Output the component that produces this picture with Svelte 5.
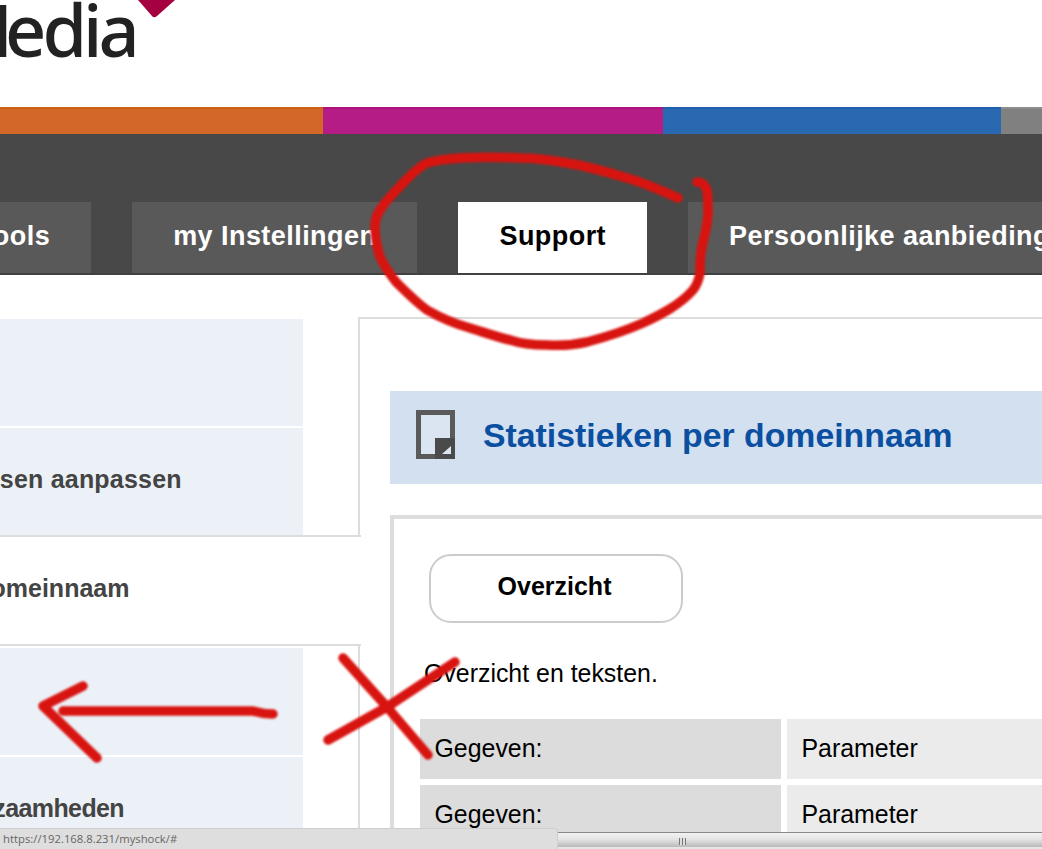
<script>
	const tabs = ['my Tools', 'my Instellingen', 'Support', 'Persoonlijke aanbiedingen'];
	const colours = ['orange', 'magenta', 'blue', 'grey'];
	const sideItems = [
		{ label: '' },
		{ label: 'Adressen aanpassen' },
		{ label: 'Per domeinnaam', active: true },
		{ label: '' },
		{ label: 'Werkzaamheden' }
	];
	const rows = [
		['Gegeven:', 'Parameter'],
		['Gegeven:', 'Parameter']
	];
</script>

<div class="viewport">
	<div class="page">
		<header class="top">
			<div class="logo">
				<span class="logoword"><span class="cap">M</span>edia</span>
				<svg class="diamond" width="44" height="20" viewBox="0 0 44 20">
					<path d="M0 0 L14 16 Q16 18.5 19 16 L37 0 Z" fill="#a5003f" />
				</svg>
			</div>
		</header>

		<div class="colourbar">
			{#each colours as c}
				<span class={c}></span>
			{/each}
		</div>

		<nav>
			{#each tabs as t}
				<a href="#top" class="tab" class:active={t === 'Support'}>{t}</a>
			{/each}
		</nav>

		<div class="content">
			<aside>
				{#each sideItems as item}
					<div class="row" class:active={item.active}>
						<div class="item">{item.label}</div>
					</div>
				{/each}
			</aside>

			<main>
				<div class="heading">
					<svg class="noteicon" width="40" height="49" viewBox="0 0 40 49">
						<rect x="2.5" y="2.5" width="34" height="44" fill="#dbe5f2" stroke="#5a5a5a" stroke-width="5" />
						<rect x="19" y="28" width="20" height="21" fill="#4a4a4a" />
						<path d="M35 36 V44 H26 Z" fill="#dbe5f2" />
					</svg>
					<h1>Statistieken per domeinnaam</h1>
				</div>

				<section class="box">
					<button class="pill">Overzicht</button>
					<p>Overzicht en teksten.</p>
					<div class="grid">
						{#each rows as r}
							<div class="key">{r[0]}</div>
							<div class="val">{r[1]}</div>
						{/each}
					</div>
				</section>
			</main>
		</div>
	</div>

	<svg class="scribble" width="1042" height="849" viewBox="0 0 1042 849">
		<g fill="none" stroke="#d81410" stroke-width="9.5" stroke-linecap="round" stroke-linejoin="round">
			<path d="M678 198 C660 190 645 183 627 178 C607 172 587 166 567 163 C550 160 535 158 520 158 C500 157 480 157 460 158 C447 159 436 160 427 163 C418 167 411 175 403 183 C395 192 386 200 380 210 C376 216 375 221 375 227 C375 238 377 247 380 257 C385 267 390 275 397 283 C406 292 416 302 427 310 C441 318 455 324 470 328 C483 332 497 337 510 340 C522 344 535 345 547 345 C561 346 574 345 587 342 C606 337 625 331 643 323 C660 315 680 305 693 290 C697 285 699 279 700 273 C700 264 700 256 702 247 C704 236 708 225 708 213 C708 205 708 197 707 190 C705 185 702 182 697 182" />
			<path d="M63 711 H253 Q263 714 273 714" />
			<path d="M83 686 L43 706 L97 758" />
			<path d="M343 658 L387 707 L428 755" />
			<path d="M455 662 L387 707 L328 740" />
		</g>
	</svg>

	<div class="status">https://192.168.8.231/myshock/#</div>
	<div class="scrollbar"><span class="grip"></span></div>
</div>

<style>
	:global(body) {
		overflow: hidden;
		background: #fff;
	}
	.viewport {
		position: relative;
		width: 100vw;
		height: 100vh;
		overflow: hidden;
		font-family: 'Liberation Sans', Arial, sans-serif;
		color: #000;
	}
	.page {
		width: 1600px;
		margin-left: -113px;
	}
	.top {
		height: 107px;
		overflow: hidden;
	}
	.logo {
		display: flow-root;
		position: relative;
		margin-left: 60px;
		height: 107px;
	}
	.logoword {
		display: block;
		font-family: 'Noto Sans', sans-serif;
		font-size: 72px;
		font-weight: 500;
		line-height: 66px;
		letter-spacing: -4px;
		margin-top: -4px;
		color: #222;
		filter: blur(0.5px);
	}
	.cap {
		letter-spacing: -8px;
	}
	.diamond {
		position: absolute;
		left: 191px;
		top: 0;
	}
	.colourbar {
		display: grid;
		grid-template-columns: 436px 340px 338px 1fr;
		height: 27px;
	}
	.colourbar span {
		border-top: 2px solid transparent;
	}
	.colourbar .orange { background: #d26827; border-color: #cf5f12; }
	.colourbar .magenta { background: #b51c85; border-color: #b0107d; }
	.colourbar .blue { background: #2b68b2; border-color: #1f60b0; }
	.colourbar .grey { background: #808080; border-color: #8c8c8c; }
	nav {
		display: flex;
		gap: 41px;
		align-items: flex-end;
		height: 139px;
		padding-left: 2px;
		background: #484848;
		border-bottom: 2px solid #414141;
	}
	.tab {
		height: 71px;
		line-height: 68px;
		padding: 0 41px;
		background: #5a5959;
		color: #fff;
		font-size: 27px;
		font-weight: bold;
		letter-spacing: 0.45px;
		text-decoration: none;
		white-space: nowrap;
	}
	.tab.active {
		background: #fff;
		color: #000;
	}
	.content {
		display: grid;
		grid-template-columns: 473px 1fr;
		margin-top: 42px;
	}
	.row {
		padding: 0 55px 0 0;
		border-right: 2px solid #ddd;
	}
	.row:first-child, .row:nth-child(4) {
		padding-top: 2px;
		padding-bottom: 2px;
	}
	.row.active {
		padding: 0;
		border-right: 0;
		border-top: 2px solid #ddd;
		border-bottom: 2px solid #ddd;
		margin-right: -1px;
		background: #fff;
		position: relative;
	}
	.item {
		height: 107px;
		line-height: 102px;
		padding-left: 41px;
		background: #ecf1f8;
		color: #444;
		font-size: 25px;
		font-weight: bold;
		white-space: nowrap;
	}
	.row:nth-child(2) .item {
		letter-spacing: 0.2px;
	}
	.row:last-child .item {
		padding-left: 48px;
		letter-spacing: -0.6px;
	}
	.row.active .item {
		background: #fff;
	}
	main {
		border-top: 2px solid #ddd;
		padding: 72px 0 0 30px;
	}
	.heading {
		display: flex;
		align-items: center;
		gap: 27px;
		height: 93px;
		padding-left: 26px;
		background: #d3e0f0;
	}
	.noteicon {
		margin-bottom: 6px;
	}
	h1 {
		margin: 0 0 4px;
		font-size: 33.8px;
		font-weight: bold;
		color: #0b4fa1;
	}
	.box {
		margin-top: 31px;
		border: 4px solid #ddd;
		padding: 35px 0 0 26px;
	}
	.pill {
		display: block;
		width: 254px;
		height: 69px;
		margin-left: 9px;
		padding: 0 3px 4px 0;
		background: #fff;
		border: 2px solid #ccc;
		border-radius: 22px;
		font: bold 25px 'Liberation Sans', Arial, sans-serif;
		color: #000;
	}
	p {
		margin: 35px 0 31px 4px;
		font-size: 24.9px;
		line-height: 30px;
	}
	.grid {
		display: grid;
		grid-template-columns: 361px 1fr;
		grid-auto-rows: 60px;
		gap: 6px;
		font-size: 24.9px;
		line-height: 58px;
	}
	.key, .val {
		padding-left: 14.5px;
	}
	.key { background: #dcdcdc; }
	.val { background: #ebebeb; }
	.scribble {
		position: absolute;
		left: 0;
		top: 0;
		filter: blur(0.8px);
		pointer-events: none;
	}
	.status {
		position: absolute;
		left: 0;
		bottom: 0;
		box-sizing: border-box;
		width: 558px;
		height: 21px;
		padding-left: 3px;
		background: #dedede;
		border-top: 1px solid #cfcfcf;
		border-top-right-radius: 4px;
		border-right: 1px solid #cfcfcf;
		font-family: 'Open Sans', sans-serif;
		font-size: 11.3px;
		line-height: 20px;
		color: #666;
	}
	.scrollbar {
		position: absolute;
		left: 558px;
		right: 0;
		bottom: 0;
		height: 17px;
		border-top: 1px solid #888;
		box-sizing: border-box;
		background: linear-gradient(#f2f2f2, #e4e4e4 40%, #b8b8b8 88%, #e6e6e6 90%);
	}
	.grip {
		position: absolute;
		left: 121px;
		top: 5px;
		width: 7px;
		height: 7px;
		background: repeating-linear-gradient(90deg, #777 0 1px, #ddd 1px 3px);
	}
</style>
